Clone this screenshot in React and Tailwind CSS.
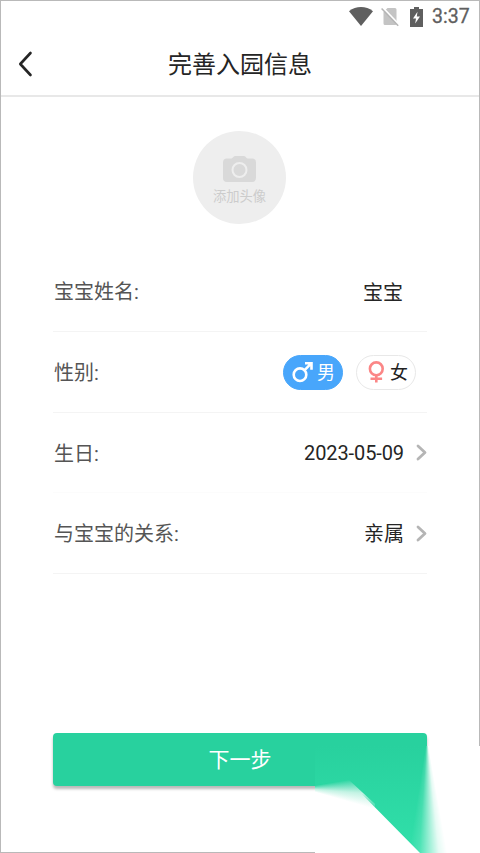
import { useState } from "react";

function StatusBar() {
  return (
    <div className="flex h-[31px] items-center justify-end pr-[10px] text-[#5f5f5f]">
      <svg className="h-[19px] w-[24px]" viewBox="0 0 24 19" fill="currentColor">
        <path d="M0 4.2C7-1.3 17-1.3 24 4.2L12 19Z" />
      </svg>
      <svg className="ml-[8px] h-[20px] w-[18px]" viewBox="0 0 18 20">
        <path d="M6.5 1H14a1.5 1.5 0 0 1 1.5 1.5V16.5A1.5 1.5 0 0 1 14 18H4a1.5 1.5 0 0 1-1.5-1.5V5Z" fill="#c4c4c4" />
        <path d="M1.6 .4L18 17.6" stroke="#fff" strokeWidth="1.8" />
        <path d="M.6 1.5L17.2 18.8" stroke="#b5b5b5" strokeWidth="1.5" />
      </svg>
      <svg className="ml-[11px] h-[20px] w-[13px]" viewBox="0 0 13 20">
        <path d="M4 0h5v2h4v18H0V2h4Z" fill="currentColor" />
        <path d="M7.5 4.7L3 11.4h3l-.8 5.2L10 9.4H6.8Z" fill="#fff" />
      </svg>
      <span className="ml-[9px] w-[37px] text-[19.5px] leading-none [-webkit-text-stroke:0.3px_#5f5f5f]">3:37</span>
    </div>
  );
}

function Chevron() {
  return (
    <svg className="ml-[12px] h-[17px] w-[11px]" viewBox="0 0 11 17" fill="none">
      <path d="M2 2l7 6.5L2 15" stroke="#b5b5b5" strokeWidth="2.8" strokeLinecap="round" strokeLinejoin="round" />
    </svg>
  );
}

function Row({ label, line = "border-[#f4f4f4]", children }) {
  return (
    <div className={`flex items-center justify-between border-b ${line}`}>
      <span className="pl-px pt-[2px] text-[20px] text-[#555]">{label}</span>
      {children}
    </div>
  );
}

function GenderPicker() {
  const [gender, setGender] = useState("male");
  const on = "border-[#48a6fb] bg-[#48a6fb] text-white";
  const off = "border-[#e8e8e8] bg-white text-[#222]";

  return (
    <div className="mr-[11px] flex gap-[13px]">
      <button
        onClick={() => setGender("male")}
        className={`flex h-[35px] w-[60px] items-center rounded-full border pl-[8px] text-[18px] ${gender === "male" ? on : off}`}
      >
        <svg className="mr-[4px] h-[22px] w-[21px] shrink-0" viewBox="0 0 21 22" fill="none" stroke="currentColor">
          <circle cx="8" cy="13.7" r="6.3" strokeWidth="2.6" />
          <path d="M12.4 9.3L18.5 3.2M13 2.2h6.5v6.5" strokeWidth="2.6" />
        </svg>
        男
      </button>
      <button
        onClick={() => setGender("female")}
        className={`flex h-[35px] w-[60px] items-center rounded-full border pl-[11px] text-[18px] ${gender === "female" ? on : off}`}
      >
        <svg className="mr-[6px] h-[22px] w-[16px] shrink-0" viewBox="0 0 16 22" fill="none" stroke="#fb8686">
          <circle cx="8.3" cy="7.8" r="6.4" strokeWidth="2.6" />
          <path d="M8.3 14.2V21.5M2.5 17.8h11.6" strokeWidth="2.6" />
        </svg>
        女
      </button>
    </div>
  );
}

// Green streak that runs off the button towards the bottom corner
function Smear() {
  return (
    <div className="absolute bottom-0 right-0 h-[107px] w-[165px] overflow-hidden bg-white">
      <div className="absolute inset-0 bg-linear-to-b from-[#28d19e] to-[#31e0aa] [clip-path:polygon(0_0,100%_0,100%_100%,105px_100%,34px_35px,0_40px)] [mask-image:conic-gradient(from_0deg_at_112px_-8px,transparent_170deg,rgba(0,0,0,0.12)_174deg,rgba(0,0,0,0.5)_179deg,rgba(0,0,0,0.88)_184deg,black_189deg)]" />
      <div className="absolute left-0 top-[20px] h-[50px] w-[60px] bg-[conic-gradient(from_0deg_at_-14px_22px,#2ad5a1_80deg,#70e2c0_87deg,#c4f3e4_95deg,#ffffff00_106deg)] [clip-path:polygon(0_19px,34px_14px,60px_38px,60px_50px,0_50px)]" />
    </div>
  );
}

export default function App() {
  return (
    <div className="relative h-[853px] w-[480px] overflow-hidden font-['Roboto','Noto_Sans_CJK_SC',sans-serif]">
      <div className="flex h-full flex-col border border-[#b9b9b9] bg-white">
        <StatusBar />

        {/* Header */}
        <header className="grid h-[65px] grid-cols-[60px_1fr_60px] items-center border-b-2 border-[#e8e8e8]">
          <button className="pl-[16px]">
            <svg className="h-[26px] w-[16px]" viewBox="0 0 16 26" fill="none">
              <path d="M13.5 2L3.3 13L13.5 24" stroke="#252525" strokeWidth="2.6" strokeLinecap="round" strokeLinejoin="round" />
            </svg>
          </button>
          <h1 className="pt-[2px] text-center text-[24px] leading-none text-[#252525]">完善入园信息</h1>
        </header>

        {/* Avatar */}
        <button className="ml-[192px] mt-[34px] flex h-[93px] w-[93px] shrink-0 flex-col items-center rounded-full bg-[#eee] pt-[25px]">
          <svg className="h-[26px] w-[33px]" viewBox="0 0 33 26">
            <path d="M4 2.5h4.5C10 2.5 10 0 12 0h9c2 0 2 2.5 3.5 2.5H29a4 4 0 0 1 4 4V22a4 4 0 0 1-4 4H4a4 4 0 0 1-4-4V6.5a4 4 0 0 1 4-4Z" fill="#d9d9d9" />
            <circle cx="16.5" cy="14" r="7" fill="none" stroke="#eee" strokeWidth="2" />
          </svg>
          <span className="mt-[8px] text-[13.3px] leading-none text-[#ccc]">添加头像</span>
        </button>

        {/* Form */}
        <div className="mx-[52px] mt-[27px] grid shrink-0 grid-rows-[81px_81px_80px_81px] text-[20px] text-[#252525]">
          <Row label="宝宝姓名:">
            <span className="mr-[24px] pt-[3px]">宝宝</span>
          </Row>
          <Row label="性别:">
            <GenderPicker />
          </Row>
          <Row label="生日:" line="border-[#fcfcfc]">
            <span className="flex items-center tracking-[-0.1px]">2023-05-09<Chevron /></span>
          </Row>
          <Row label="与宝宝的关系:">
            <span className="flex items-center"><span className="pt-[2px]">亲属</span><Chevron /></span>
          </Row>
        </div>

        <button className="mx-[52px] mt-[159px] h-[53px] shrink-0 rounded-[4px] bg-[#28d19e] pt-[3px] text-[21px] text-white shadow-[0_3px_3px_rgba(0,0,0,0.28)]">
          下一步
        </button>
      </div>

      <Smear />
    </div>
  );
}
